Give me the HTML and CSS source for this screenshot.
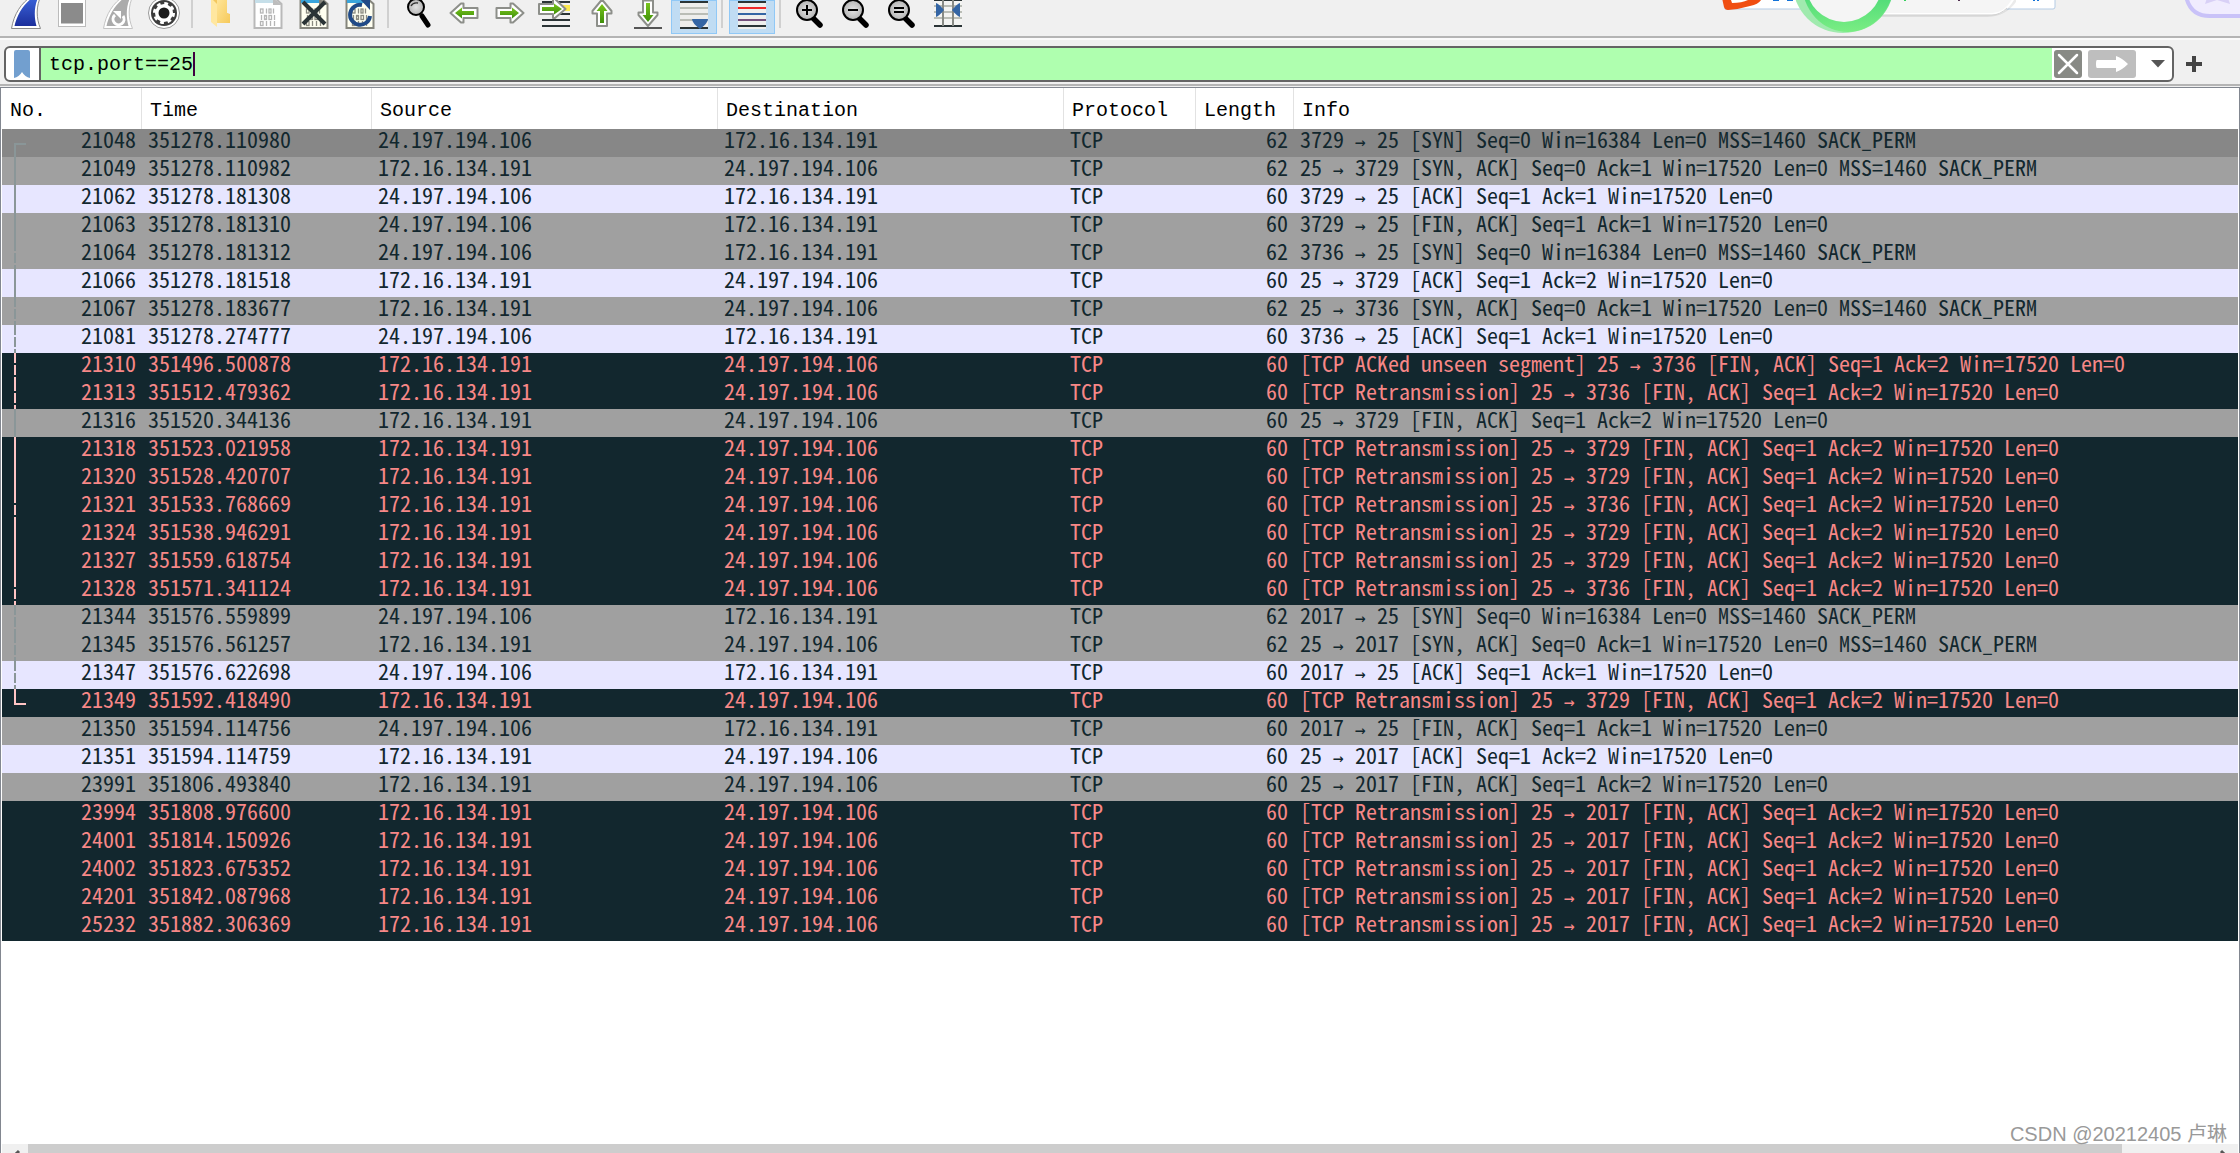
FILE: index.html
```html
<!DOCTYPE html>
<html lang="en">
<head>
<meta charset="utf-8">
<title>tcp.port==25</title>
<link rel="stylesheet" href="styles.css">
</head>
<body>
<svg class="defs" aria-hidden="true">
  <defs>
    <linearGradient id="blueFin" x1="0" y1="0" x2="0" y2="1"><stop offset="0" stop-color="#3a62d8"/><stop offset="1" stop-color="#1c2f9c"/></linearGradient>
    <linearGradient id="greenArrow" x1="0" y1="0" x2="0" y2="1"><stop offset="0" stop-color="#7ac51d"/><stop offset="1" stop-color="#3f8f0a"/></linearGradient>
    <linearGradient id="folderFill" x1="0" y1="0" x2="1" y2="1"><stop offset="0" stop-color="#ffe69a"/><stop offset="1" stop-color="#f6c95a"/></linearGradient>
    <linearGradient id="ring" x1="0" y1="0" x2="0" y2="1"><stop offset="0.500" stop-color="#2fd06a"/><stop offset="1" stop-color="#74ee7c"/></linearGradient>
    <radialGradient id="lens"><stop offset="0" stop-color="#e2e2e2"/><stop offset="1" stop-color="#b4b4b4"/></radialGradient>
    <g id="bits" fill="none" stroke-width="1.3">
      <g id="bitrow"><rect x="15.500" y="9" width="2.500" height="4"/><path d="M21.500 8.500v5M28.500 8.500v5"/><rect x="24" y="9" width="2" height="4"/></g>
      <path d="M16.500 15v5M29.500 15v5"/><rect x="19.500" y="15.500" width="2" height="4"/><rect x="24" y="15.500" width="2.500" height="4"/>
      <rect x="15.500" y="21.500" width="2.500" height="4"/><path d="M21.500 21v5M25.500 21v5M29.500 21v5"/>
    </g>
    <g id="glass">
      <path d="M25 17l8 8" stroke="#000" stroke-width="5.500" stroke-linecap="round"/>
      <circle cx="20" cy="10" r="10" fill="url(#lens)" stroke="#000" stroke-width="2"/>
    </g>
  </defs>
</svg>

<header class="toolbar">
  <div class="tools">
    <button class="tool" aria-label="Start capture"><svg viewBox="0 0 46 36"><path d="M8.500 28.500C11 14 18 3 29 -4H38C33 6 33 18 37.500 28.500Z" fill="#fff" stroke="#8a8a8a"/><path d="M11.500 26C14 15 20 5 29 -2H35C31 7 31 17 33.500 26Z" fill="url(#blueFin)"/></svg></button>
    <button class="tool" aria-label="Stop capture"><svg viewBox="0 0 46 36"><rect x="9.500" y="-4" width="27" height="30.500" fill="#fff" stroke="#bbb"/><rect x="12" y="3" width="22" height="20.500" fill="#8b8b8b"/></svg></button>
    <button class="tool" aria-label="Restart capture"><svg viewBox="0 0 46 36"><path d="M8.500 28.500C11 14 18 3 29 -4H38C33 6 33 18 37.500 28.500Z" fill="#fff" stroke="#c4c4c4"/><path d="M11.500 26C14 15 20 5 29 -2H35C31 7 31 17 33.500 26Z" fill="#ababab"/><path d="M20 15a5.500 5.500 0 1 0 8 1" fill="none" stroke="#fff" stroke-width="3"/><path d="M18 11h8v8z" fill="#fff"/></svg></button>
    <button class="tool" aria-label="Capture options"><svg viewBox="0 0 46 36"><circle cx="23" cy="13" r="15.500" fill="#fff" stroke="#999"/><circle cx="23" cy="13" r="13" fill="#3c3c3c"/><circle cx="23" cy="13" r="9" fill="#fff"/><circle cx="23" cy="13" r="9.500" fill="none" stroke="#fff" stroke-width="3" stroke-dasharray="3.700 3.760"/><circle cx="23" cy="13" r="5.500" fill="#1c1c1c"/></svg></button>
    <span class="sep"></span>
    <button class="tool" aria-label="Open"><svg viewBox="0 0 46 36"><path d="M12 -2H28V13L31 14V23H16Z" fill="#f3c860"/><path d="M12 -2L18 4V27L12 22Z" fill="#ffe7a0"/><path d="M18 4V-2H28V13L31 15V23H18Z" fill="url(#folderFill)"/></svg></button>
    <button class="tool" aria-label="Save"><svg viewBox="0 0 46 36"><path d="M9.500 -2H30L36.500 4V28H9.500Z" fill="#fff" stroke="#b9b9b9" stroke-width="2"/><path d="M10 0H28L30 3H10Z" fill="#c6dfe9"/><path d="M28 -2V5H37Z" fill="#bdbdbd"/><use href="#bits" stroke="#b5b5b5"/></svg></button>
    <button class="tool" aria-label="Close"><svg viewBox="0 0 46 36"><path d="M9.500 -2H30L36.500 4V28H9.500Z" fill="#fffff0" stroke="#85857c" stroke-width="2"/><path d="M10 0H28L30 3H10Z" fill="#3aa5dc"/><path d="M28 -2V5H37Z" fill="#85857c"/><use href="#bits" stroke="#8a8a80"/><path d="M12 2L34 24M34 2L12 24" stroke="#2b3436" stroke-width="4"/></svg></button>
    <button class="tool" aria-label="Reload"><svg viewBox="0 0 46 36"><path d="M9.500 -2H30L36.500 4V28H9.500Z" fill="#fffff0" stroke="#85857c" stroke-width="2"/><path d="M10 0H28L30 3H10Z" fill="#3aa5dc"/><use href="#bits" stroke="#8a8a80"/><path d="M25 5A10 10 0 1 0 33 16" fill="none" stroke="#204a87" stroke-width="4"/><path d="M22 -2H33V10Z" fill="#204a87"/></svg></button>
    <span class="sep"></span>
    <button class="tool" aria-label="Find packet"><svg viewBox="0 0 46 36"><path d="M27 16l6 9" stroke="#000" stroke-width="5" stroke-linecap="round"/><circle cx="21" cy="7" r="8" fill="url(#lens)" stroke="#000" stroke-width="2"/><path d="M16 6q2-4 7-3" fill="none" stroke="#333" stroke-width="1.300"/></svg></button>
    <button class="tool" aria-label="Previous packet"><svg viewBox="0 0 46 36"><path d="M9.500 13L20 3.500H22.500V8H36.500V18H22.500V22.500H20Z" fill="#fff" stroke="#8d8f8a" stroke-width="2" stroke-linejoin="round"/><path d="M14 13L21 7.500V11H33V15H21V18.500Z" fill="url(#greenArrow)"/></svg></button>
    <button class="tool" aria-label="Next packet"><svg viewBox="0 0 46 36"><path d="M36.500 13L26 3.500H23.500V8H9.500V18H23.500V22.500H26Z" fill="#fff" stroke="#8d8f8a" stroke-width="2" stroke-linejoin="round"/><path d="M32 13L25 7.500V11H13V15H25V18.500Z" fill="url(#greenArrow)"/></svg></button>
    <button class="tool" aria-label="Go to packet"><svg viewBox="0 0 46 36"><path d="M9 2H37M9 14H37M9 20H37M9 26H37" stroke="#2b3436" stroke-width="2"/><path d="M30 5h7v6h-7z" fill="#fce94f"/><path d="M32.500 9L22 -1H20V4H6V14H20V18H22Z" fill="#fff" stroke="#8d8f8a" stroke-width="2" stroke-linejoin="round"/><path d="M29 9L21 3.500V7H9V11H21V14.500Z" fill="url(#greenArrow)"/></svg></button>
    <button class="tool" aria-label="First packet"><svg viewBox="0 0 46 36"><path d="M23 -0.500L32.500 11V13.500H28V26H18V13.500H13.500V11Z" fill="#fff" stroke="#8d8f8a" stroke-width="2" stroke-linejoin="round"/><path d="M23 4L28.500 11H25V23H21V11H17.500Z" fill="url(#greenArrow)"/></svg></button>
    <button class="tool" aria-label="Last packet"><svg viewBox="0 0 46 36"><path d="M9 28H37" stroke="#555" stroke-width="2"/><path d="M23 26L32.500 15V12.500H28V0.500H18V12.500H13.500V15Z" fill="#fff" stroke="#8d8f8a" stroke-width="2" stroke-linejoin="round"/><path d="M23 22L28.500 15H25V3H21V15H17.500Z" fill="url(#greenArrow)"/></svg></button>
    <button class="tool on" aria-label="Auto scroll" aria-pressed="true"><svg viewBox="0 0 46 36"><path d="M9 1H37V29H9z" fill="#eeeeec"/><path d="M9 8H37M9 14H37M9 20H37" stroke="#babdb6" stroke-width="2"/><path d="M9 2H37M9 28H37" stroke="#2b3436" stroke-width="2"/><path d="M21 19H37Q37 23 29 29Q21 23 21 19Z" fill="#3465a4"/></svg></button>
    <span class="sep"></span>
    <button class="tool on" aria-label="Colorize packets" aria-pressed="true"><svg viewBox="0 0 46 36"><path d="M9 1H37V29H9z" fill="#eeeeec"/><path d="M9 2H37M9 26H37" stroke="#2b3436" stroke-width="2"/><path d="M9 8H37" stroke="#ef2929" stroke-width="2"/><path d="M9 14H37" stroke="#3465a4" stroke-width="2"/><path d="M9 20H37" stroke="#75507b" stroke-width="2"/></svg></button>
    <span class="sep"></span>
    <button class="tool" aria-label="Zoom in"><svg viewBox="0 0 46 36"><use href="#glass"/><path d="M15 10H25M20 5V15" stroke="#000" stroke-width="2"/></svg></button>
    <button class="tool" aria-label="Zoom out"><svg viewBox="0 0 46 36"><use href="#glass"/><path d="M15 10H25" stroke="#000" stroke-width="2"/></svg></button>
    <button class="tool" aria-label="Normal size"><svg viewBox="0 0 46 36"><use href="#glass"/><path d="M15 8H25M15 12H25" stroke="#000" stroke-width="2"/></svg></button>
    <button class="tool" aria-label="Resize columns"><svg viewBox="0 0 46 36"><path d="M9 0H37V27H9z" fill="#f4f4f2"/><path d="M9 6H37M9 12H37M9 18H37" stroke="#babdb6" stroke-width="2"/><path d="M9 0H37M9 26H37" stroke="#2b3436" stroke-width="2"/><path d="M18 0V26M28 0V26" stroke="#888a85" stroke-width="2"/><path d="M11 3Q14 4 19 10Q14 16 11 17ZM35 3Q32 4 27 10Q32 16 35 17Z" fill="#3465a4"/></svg></button>
  </div>
  <svg class="overlay-apps" viewBox="0 0 540 36" aria-hidden="true">
    <path d="M25 -5H353Q355 -5 355 -3V7Q355 9 353 9H25Z" fill="#fff" stroke="#b4cbe4"/>
    <path d="M73 0h6M87 0h6M334 0v1M338 0v1" stroke="#1272d8" stroke-width="2"/>
    <path d="M22 -2H62Q60 4 50 6Q40 9 28 10Q25 10 24 7Z" fill="#f04e12"/><path d="M31 0H48Q42 3 32 3Z" fill="#fff"/>
    <path d="M180 17H288Q306 16 316 2V-4H180Z" fill="#000" opacity=".08"/>
    <path d="M150 -4H315Q306 14 292 14H150Z" fill="#f5f5f5" stroke="#fff" stroke-width="2"/>
    <path d="M150 15H292Q300 15 307 8" fill="none" stroke="#cfcfcf"/>
    <path d="M205 0v1" stroke="#35d05c" stroke-width="2"/><path d="M259 0v1" stroke="#503050" stroke-width="2"/>
    <ellipse cx="143" cy="-16" rx="50" ry="49" fill="#a0eaae"/>
    <ellipse cx="148" cy="-17" rx="46" ry="49" fill="url(#ring)" opacity=".85"/>
    <circle cx="144" cy="-16" r="38" fill="#f5f5f5"/>
    <path d="M486 -4Q490 16 510 16H542V-4Z" fill="#f0ecfe" stroke="#c9c2f8" stroke-width="4"/>
    <path d="M505 4L507 -2H528L530 4L517 0Z" fill="#d8d0f6"/>
  </svg>
</header>

<form class="filterbar">
  <div class="filterbox">
    <button type="button" class="mark" aria-label="Bookmarks"><svg width="16" height="28" viewBox="0 0 16 28"><path d="M0 2Q0 0 2 0H14Q16 0 16 2V28Q11 27 8 22Q5 27 0 28Z" fill="#729fcf"/></svg></button>
    <label class="field"><span class="hidden">Display filter</span><input type="text" value="tcp.port==25" spellcheck="false"><i class="caret"></i></label>
    <button type="button" class="clear" aria-label="Clear"><svg width="28" height="28" viewBox="0 0 28 28"><rect width="28" height="28" rx="3" fill="#888a85"/><path d="M5 5L23 23M23 5L5 23" stroke="#fff" stroke-width="2.500" stroke-linecap="round"/></svg></button>
    <button type="button" class="apply" aria-label="Apply"><svg width="48" height="28" viewBox="0 0 48 28"><rect width="48" height="28" rx="3" fill="#bebebe"/><path d="M9 10H28V6Q34 8 40 14Q34 20 28 22V18H9Q8 18 8 14Q8 10 9 10Z" fill="#fff"/></svg></button>
    <button type="button" class="drop" aria-label="Recent filters"><svg width="14" height="8" viewBox="0 0 14 8"><path d="M0 0H14L7 7.500Z" fill="#555"/></svg></button>
  </div>
  <button type="button" class="plus" aria-label="Add filter"><svg width="16" height="16" viewBox="0 0 16 16"><path d="M0 8H16M8 0V16" stroke="#444" stroke-width="4"/></svg></button>
</form>

<main class="packets">
<table>
<colgroup><col class="c-no"><col class="c-time"><col class="c-addr"><col class="c-addr"><col class="c-proto"><col class="c-len"><col></colgroup>
<thead><tr><th>No.</th><th>Time</th><th>Source</th><th>Destination</th><th>Protocol</th><th>Length</th><th>Info</th></tr></thead>
<tbody>
<tr class="gray current first"><td>21048</td><td>351278.110980</td><td>24.197.194.106</td><td>172.16.134.191</td><td>TCP</td><td>62</td><td>3729 <b>→</b> 25 [SYN] Seq=0 Win=16384 Len=0 MSS=1460 SACK_PERM</td></tr>
<tr class="gray line"><td>21049</td><td>351278.110982</td><td>172.16.134.191</td><td>24.197.194.106</td><td>TCP</td><td>62</td><td>25 <b>→</b> 3729 [SYN, ACK] Seq=0 Ack=1 Win=17520 Len=0 MSS=1460 SACK_PERM</td></tr>
<tr class="tcp line"><td>21062</td><td>351278.181308</td><td>24.197.194.106</td><td>172.16.134.191</td><td>TCP</td><td>60</td><td>3729 <b>→</b> 25 [ACK] Seq=1 Ack=1 Win=17520 Len=0</td></tr>
<tr class="gray line"><td>21063</td><td>351278.181310</td><td>24.197.194.106</td><td>172.16.134.191</td><td>TCP</td><td>60</td><td>3729 <b>→</b> 25 [FIN, ACK] Seq=1 Ack=1 Win=17520 Len=0</td></tr>
<tr class="gray dash"><td>21064</td><td>351278.181312</td><td>24.197.194.106</td><td>172.16.134.191</td><td>TCP</td><td>62</td><td>3736 <b>→</b> 25 [SYN] Seq=0 Win=16384 Len=0 MSS=1460 SACK_PERM</td></tr>
<tr class="tcp line"><td>21066</td><td>351278.181518</td><td>172.16.134.191</td><td>24.197.194.106</td><td>TCP</td><td>60</td><td>25 <b>→</b> 3729 [ACK] Seq=1 Ack=2 Win=17520 Len=0</td></tr>
<tr class="gray dash"><td>21067</td><td>351278.183677</td><td>172.16.134.191</td><td>24.197.194.106</td><td>TCP</td><td>62</td><td>25 <b>→</b> 3736 [SYN, ACK] Seq=0 Ack=1 Win=17520 Len=0 MSS=1460 SACK_PERM</td></tr>
<tr class="tcp dash"><td>21081</td><td>351278.274777</td><td>24.197.194.106</td><td>172.16.134.191</td><td>TCP</td><td>60</td><td>3736 <b>→</b> 25 [ACK] Seq=1 Ack=1 Win=17520 Len=0</td></tr>
<tr class="bad dash"><td>21310</td><td>351496.500878</td><td>172.16.134.191</td><td>24.197.194.106</td><td>TCP</td><td>60</td><td>[TCP ACKed unseen segment] 25 <b>→</b> 3736 [FIN, ACK] Seq=1 Ack=2 Win=17520 Len=0</td></tr>
<tr class="bad dash"><td>21313</td><td>351512.479362</td><td>172.16.134.191</td><td>24.197.194.106</td><td>TCP</td><td>60</td><td>[TCP Retransmission] 25 <b>→</b> 3736 [FIN, ACK] Seq=1 Ack=2 Win=17520 Len=0</td></tr>
<tr class="gray line"><td>21316</td><td>351520.344136</td><td>172.16.134.191</td><td>24.197.194.106</td><td>TCP</td><td>60</td><td>25 <b>→</b> 3729 [FIN, ACK] Seq=1 Ack=2 Win=17520 Len=0</td></tr>
<tr class="bad line"><td>21318</td><td>351523.021958</td><td>172.16.134.191</td><td>24.197.194.106</td><td>TCP</td><td>60</td><td>[TCP Retransmission] 25 <b>→</b> 3729 [FIN, ACK] Seq=1 Ack=2 Win=17520 Len=0</td></tr>
<tr class="bad line"><td>21320</td><td>351528.420707</td><td>172.16.134.191</td><td>24.197.194.106</td><td>TCP</td><td>60</td><td>[TCP Retransmission] 25 <b>→</b> 3729 [FIN, ACK] Seq=1 Ack=2 Win=17520 Len=0</td></tr>
<tr class="bad dash"><td>21321</td><td>351533.768669</td><td>172.16.134.191</td><td>24.197.194.106</td><td>TCP</td><td>60</td><td>[TCP Retransmission] 25 <b>→</b> 3736 [FIN, ACK] Seq=1 Ack=2 Win=17520 Len=0</td></tr>
<tr class="bad line"><td>21324</td><td>351538.946291</td><td>172.16.134.191</td><td>24.197.194.106</td><td>TCP</td><td>60</td><td>[TCP Retransmission] 25 <b>→</b> 3729 [FIN, ACK] Seq=1 Ack=2 Win=17520 Len=0</td></tr>
<tr class="bad line"><td>21327</td><td>351559.618754</td><td>172.16.134.191</td><td>24.197.194.106</td><td>TCP</td><td>60</td><td>[TCP Retransmission] 25 <b>→</b> 3729 [FIN, ACK] Seq=1 Ack=2 Win=17520 Len=0</td></tr>
<tr class="bad dash"><td>21328</td><td>351571.341124</td><td>172.16.134.191</td><td>24.197.194.106</td><td>TCP</td><td>60</td><td>[TCP Retransmission] 25 <b>→</b> 3736 [FIN, ACK] Seq=1 Ack=2 Win=17520 Len=0</td></tr>
<tr class="gray dash"><td>21344</td><td>351576.559899</td><td>24.197.194.106</td><td>172.16.134.191</td><td>TCP</td><td>62</td><td>2017 <b>→</b> 25 [SYN] Seq=0 Win=16384 Len=0 MSS=1460 SACK_PERM</td></tr>
<tr class="gray dash"><td>21345</td><td>351576.561257</td><td>172.16.134.191</td><td>24.197.194.106</td><td>TCP</td><td>62</td><td>25 <b>→</b> 2017 [SYN, ACK] Seq=0 Ack=1 Win=17520 Len=0 MSS=1460 SACK_PERM</td></tr>
<tr class="tcp dash"><td>21347</td><td>351576.622698</td><td>24.197.194.106</td><td>172.16.134.191</td><td>TCP</td><td>60</td><td>2017 <b>→</b> 25 [ACK] Seq=1 Ack=1 Win=17520 Len=0</td></tr>
<tr class="bad last"><td>21349</td><td>351592.418490</td><td>172.16.134.191</td><td>24.197.194.106</td><td>TCP</td><td>60</td><td>[TCP Retransmission] 25 <b>→</b> 3729 [FIN, ACK] Seq=1 Ack=2 Win=17520 Len=0</td></tr>
<tr class="gray"><td>21350</td><td>351594.114756</td><td>24.197.194.106</td><td>172.16.134.191</td><td>TCP</td><td>60</td><td>2017 <b>→</b> 25 [FIN, ACK] Seq=1 Ack=1 Win=17520 Len=0</td></tr>
<tr class="tcp"><td>21351</td><td>351594.114759</td><td>172.16.134.191</td><td>24.197.194.106</td><td>TCP</td><td>60</td><td>25 <b>→</b> 2017 [ACK] Seq=1 Ack=2 Win=17520 Len=0</td></tr>
<tr class="gray"><td>23991</td><td>351806.493840</td><td>172.16.134.191</td><td>24.197.194.106</td><td>TCP</td><td>60</td><td>25 <b>→</b> 2017 [FIN, ACK] Seq=1 Ack=2 Win=17520 Len=0</td></tr>
<tr class="bad"><td>23994</td><td>351808.976600</td><td>172.16.134.191</td><td>24.197.194.106</td><td>TCP</td><td>60</td><td>[TCP Retransmission] 25 <b>→</b> 2017 [FIN, ACK] Seq=1 Ack=2 Win=17520 Len=0</td></tr>
<tr class="bad"><td>24001</td><td>351814.150926</td><td>172.16.134.191</td><td>24.197.194.106</td><td>TCP</td><td>60</td><td>[TCP Retransmission] 25 <b>→</b> 2017 [FIN, ACK] Seq=1 Ack=2 Win=17520 Len=0</td></tr>
<tr class="bad"><td>24002</td><td>351823.675352</td><td>172.16.134.191</td><td>24.197.194.106</td><td>TCP</td><td>60</td><td>[TCP Retransmission] 25 <b>→</b> 2017 [FIN, ACK] Seq=1 Ack=2 Win=17520 Len=0</td></tr>
<tr class="bad"><td>24201</td><td>351842.087968</td><td>172.16.134.191</td><td>24.197.194.106</td><td>TCP</td><td>60</td><td>[TCP Retransmission] 25 <b>→</b> 2017 [FIN, ACK] Seq=1 Ack=2 Win=17520 Len=0</td></tr>
<tr class="bad"><td>25232</td><td>351882.306369</td><td>172.16.134.191</td><td>24.197.194.106</td><td>TCP</td><td>60</td><td>[TCP Retransmission] 25 <b>→</b> 2017 [FIN, ACK] Seq=1 Ack=2 Win=17520 Len=0</td></tr>
</tbody>
</table>
<div class="scroll" aria-hidden="true">
  <svg width="26" height="9" viewBox="0 0 26 9"><path d="M17 7L12 12" stroke="#555" stroke-width="3"/></svg>
  <div class="thumb"></div>
  <svg width="26" height="9" viewBox="0 0 26 9"><path d="M9 7L14 12" stroke="#555" stroke-width="3"/></svg>
</div>
<p class="watermark">CSDN @20212405 卢琳</p>
</main>
</body>
</html>
```
FILE: styles.css
```css
* { box-sizing: border-box; }

body {
  margin: 0;
  height: 100vh;
  overflow: hidden;
  display: flex;
  flex-direction: column;
  background: #f0f0f0;
}

button {
  padding: 0;
  border: 0;
  background: none;
  display: flex;
  align-items: center;
  justify-content: center;
}

svg { display: block; }

.defs { position: absolute; width: 0; height: 0; }

.hidden {
  position: absolute;
  width: 1px;
  height: 1px;
  overflow: hidden;
  clip-path: inset(50%);
}

/* Main toolbar */
.toolbar {
  flex: none;
  display: flex;
  justify-content: space-between;
  height: 38px;
  border-bottom: 2px solid #b4b4b4;
  overflow: hidden;
}

.tools { display: flex; padding-left: 3px; }

.tool { width: 46px; height: 34px; align-items: flex-start; }
.tool svg { width: 46px; height: 36px; flex: none; }

.tool.on {
  background: #c0dcf3;
  box-shadow: inset 0 0 0 1px #90c8f6;
}

.sep {
  width: 2px;
  height: 28px;
  margin: 0 6px 0 4px;
  background: #d0d0d0;
}

.overlay-apps { width: 540px; height: 36px; }

/* Display filter */
.filterbar {
  flex: none;
  display: flex;
  align-items: center;
  height: 48px;
  padding: 3px 38px 0 4px;
  gap: 12px;
  border-top: 2px solid #fafafa;
  border-bottom: 2px solid #b4b4b4;
}

.filterbox {
  flex: 1;
  display: flex;
  height: 36px;
  border: 2px solid #646464;
  border-radius: 6px;
  background: #fff;
  overflow: hidden;
}

.mark { width: 35px; border-right: 2px solid #646464; padding-right: 2px; }

.field {
  flex: 1;
  display: flex;
  align-items: center;
  background: #afffaf;
}

.field input {
  width: 152px;
  height: 32px;
  padding: 2px 0 0 8px;
  border: 0;
  outline: 0;
  background: transparent;
  color: #000;
  font: 20px/30px "Liberation Mono", monospace;
}

.caret { width: 2px; height: 24px; background: #400040; }

.clear { width: 32px; }
.apply { width: 52px; margin-left: 2px; }
.drop { width: 34px; padding-left: 6px; }
.plus { width: 16px; }

/* Packet list */
.packets {
  position: relative;
  flex: 1;
  display: flex;
  flex-direction: column;
  justify-content: space-between;
  margin-top: 1px;
  padding: 0 1px;
  border: 1px solid #828790;
  border-bottom: 0;
  background: #fff;
}

table {
  width: 100%;
  table-layout: fixed;
  border-collapse: separate;
  border-spacing: 0;
  color: #12272e;
  font: 22px/18px "Noto Sans Mono CJK SC", "Liberation Mono", monospace;
}

.c-no { width: 140px; }
.c-time { width: 230px; }
.c-addr { width: 346px; }
.c-proto { width: 132px; }
.c-len { width: 98px; }

th {
  height: 41px;
  padding: 4px 0 0 8px;
  border-right: 1px solid #e2e2e2;
  color: #000;
  font: 20px/30px "Liberation Mono", monospace;
  text-align: left;
}
th:last-child { border-right: 0; }

td {
  height: 28px;
  padding: 0 0 0 6px;
  white-space: nowrap;
  vertical-align: top;
}
td:nth-child(1), td:nth-child(6) { padding: 0 6px 0 0; text-align: right; }

td b {
  display: inline-block;
  width: 11px;
  font: 18px/18px "DejaVu Sans Mono", monospace;
}

.gray { background: #a0a0a0; --graph: #8a9698; }
.tcp { background: #e7e6ff; --graph: #8a9698; }
.bad { background: #12272e; color: #f78787; --graph: #ffc4c4; }
.current { background: #878787; }

/* Conversation line beside the packet numbers */
.line td:first-child {
  background: linear-gradient(var(--graph), var(--graph)) 12px 0 / 2px 28px no-repeat;
}
.dash td:first-child {
  background: linear-gradient(var(--graph) 10px, transparent 10px 12px, var(--graph) 12px 22px, transparent 22px 24px, var(--graph) 24px) 12px 0 / 2px 28px no-repeat;
}
.first td:first-child {
  background:
    linear-gradient(var(--graph), var(--graph)) 12px 14px / 2px 14px no-repeat,
    linear-gradient(var(--graph), var(--graph)) 12px 14px / 12px 2px no-repeat;
}
.last td:first-child {
  background:
    linear-gradient(var(--graph), var(--graph)) 12px 0 / 2px 16px no-repeat,
    linear-gradient(var(--graph), var(--graph)) 12px 14px / 12px 2px no-repeat;
}

.scroll { display: flex; height: 9px; background: #f0f0f0; }
.thumb { flex: 1; margin-right: 90px; background: #cdcdcd; }

.watermark {
  position: absolute;
  right: 12px;
  bottom: 6px;
  margin: 0;
  color: #999;
  font: 20px/26px "Liberation Sans", "Noto Sans CJK SC", sans-serif;
}
```
